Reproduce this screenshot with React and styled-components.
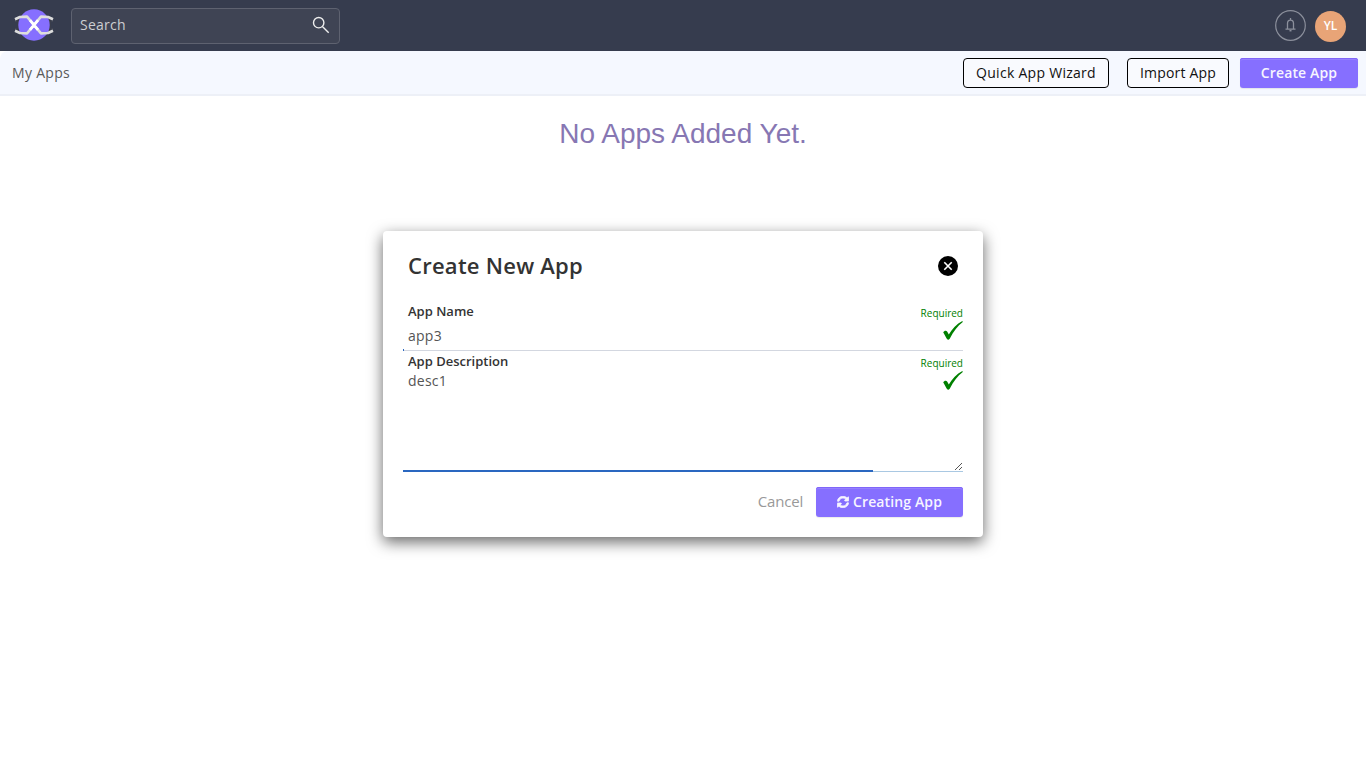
import React from 'react';
import styled, { createGlobalStyle } from 'styled-components';
import { FaSyncAlt } from 'react-icons/fa';

const GlobalStyle = createGlobalStyle`
  * { box-sizing: border-box; }
  body {
    margin: 0;
    min-height: 100vh;
    background: #fff;
    font-family: "Open Sans", sans-serif;
    font-size: 14px;
    color: #555;
  }
  button, input { font: inherit; margin: 0; }
`;

const Header = styled.header`
  display: flex;
  align-items: center;
  height: 51px;
  padding: 0 20px 0 14px;
  background: #363c4e;
`;

const Logo = styled.svg`
  display: block;
  width: 40px;
  height: 34px;
  margin: 0 17px 2px 0;
`;

const SearchBox = styled.div`
  display: flex;
  align-items: center;
  width: 269px;
  height: 36px;
  margin-top: 1px;
  padding: 0 9px 2px 8px;
  background: #3f4454;
  border: 1px solid #5e6270;
  border-radius: 4px;
`;

const SearchInput = styled.input`
  flex: 1;
  min-width: 0;
  height: 20px;
  padding: 0;
  margin-bottom: 1px;
  border: 0;
  outline: 0;
  background: transparent;
  color: #ccc;
  letter-spacing: 0.25px;
  &::placeholder { color: #ccced2; opacity: 1; }
`;

const HeaderActions = styled.div`
  display: flex;
  align-items: center;
  gap: 9px;
  margin-left: auto;
`;

const BellIcon = styled.svg`
  display: block;
  width: 31px;
  height: 31px;
`;

const Avatar = styled.div`
  width: 31px;
  height: 31px;
  margin-top: 2px;
  border-radius: 50%;
  background: #e8a477;
  color: #fff;
  font-size: 12px;
  font-weight: 600;
  line-height: 29px;
  text-align: center;
`;

const SubBarWrap = styled.nav`
  display: flex;
  align-items: center;
  height: 45px;
  padding: 1px 8px 0 12px;
  background: #f5f8ff;
  border-bottom: 2px solid #edf0f7;
  border-top-left-radius: 8px;
`;

const PageName = styled.span`
  margin: 0 auto 1px 0;
  color: #5a5a5a;
  letter-spacing: 0.3px;
`;

const OutlineButton = styled.button`
  width: ${(p) => p.$width}px;
  height: 30px;
  margin-right: ${(p) => p.$gap}px;
  padding: 0;
  border: 1px solid #000;
  border-radius: 4px;
  background: #f9fafe;
  color: #111;
  letter-spacing: ${(p) => p.$spacing}px;
  line-height: 26px;
`;

const PrimaryButton = styled.button`
  display: flex;
  align-items: center;
  justify-content: center;
  gap: 4px;
  width: ${(p) => p.$width}px;
  height: 30px;
  padding: 0 0 2px;
  border: 0;
  border-radius: 3px;
  background: #866fff;
  box-shadow: inset 0 1px 0 #7f66f8, inset 0 2px 0 #957fff, 0 1px 1px rgba(0, 0, 0, 0.08);
  color: #f7f5ff;
  font-weight: 600;
  letter-spacing: 0.13px;

  svg { margin-top: 2px; }
`;

const EmptyTitle = styled.h1`
  margin: 21px 0 0;
  color: #8777b3;
  font: 400 28px/34px "Liberation Sans", Arial, sans-serif;
  text-align: center;
`;

const Dialog = styled.section`
  width: 600px;
  height: 306px;
  margin: 80px auto 0;
  padding: 20px;
  border-radius: 4px;
  background: #fff;
  box-shadow: 0 5px 15px rgba(0, 0, 0, 0.6);
`;

const DialogHeader = styled.div`
  display: flex;
  align-items: center;
  justify-content: space-between;
  height: 30px;
  margin-bottom: 20px;
  padding: 0 5px;
`;

const DialogTitle = styled.h2`
  margin: 0 0 2px;
  color: #333;
  font-size: 22px;
  font-weight: 600;
  letter-spacing: 0.25px;
  line-height: 28px;
`;

const CloseIcon = styled.svg`
  display: block;
  width: 20px;
  height: 20px;
`;

const Field = styled.div`
  display: flex;
  justify-content: space-between;
  height: ${(p) => p.$height}px;
  padding-left: 5px;
  border-bottom: 1px solid ${(p) => p.$line};
`;

const FieldMain = styled.div`
  flex: 1;
`;

const Label = styled.label`
  display: block;
  color: #333;
  font-size: 13px;
  font-weight: 600;
  line-height: 20px;
`;

const Value = styled.div`
  margin-top: ${(p) => p.$offset}px;
  letter-spacing: 0.25px;
  line-height: 20px;
`;

const FieldStatus = styled.div`
  display: flex;
  flex-direction: column;
  align-items: flex-end;
  color: #008000;
  font-size: 10px;
  line-height: 14px;
  padding-top: 5px;
`;

const Check = styled.svg`
  display: block;
  width: 20px;
  height: 20px;
  margin-top: 1px;
`;

const Grip = styled.svg`
  display: block;
  width: 9px;
  height: 9px;
  margin-top: auto;
`;

/* Sits on the field's bottom border. */
const Progress = styled.div`
  position: relative;
  width: ${(p) => p.$width}px;
  height: 2px;
  margin-top: -2px;
  background: #2a67c0;
`;

const DialogFooter = styled.div`
  display: flex;
  align-items: center;
  justify-content: flex-end;
  gap: 13px;
  margin-top: 15px;
`;

const Cancel = styled.button`
  padding: 0 0 2px;
  border: 0;
  background: none;
  color: #999;
  font-size: 15px;
  letter-spacing: -0.2px;
  line-height: 28px;
`;

const CheckMark = () => (
  <Check viewBox="0 0 20 20">
    <path d="M0.2 11.3C1.2 9.6 3.3 9.2 4.3 10.7L5.8 13.5C9.2 7.8 13.6 2.8 19.4 0L19.8 1.1C14.5 5.1 10.3 11 7 17.2C6 18.9 4.4 19.3 3.6 17.6Z" fill="#008000" />
  </Check>
);

export default function App() {
  return (
    <>
      <GlobalStyle />
      <Header>
        <Logo viewBox="0 0 40 34">
          <path d="M1.8 10.5V14M38.2 10.5V14M1.8 20V23.5M38.2 20V23.5" stroke="#4b4e59" />
          <path d="M4.2 10.5V23.5M35.8 10.5V23.5" stroke="#3c3e48" strokeWidth="1.6" />
          <circle cx="20" cy="17" r="15.7" fill="#866fff" />
          <path d="M1 11.3L6 9L13 8.6L27 25.4L34 25L39 22.7M39 11.3L34 9L27 8.6L13 25.4L6 25L1 22.7" fill="none" stroke="#ddd" strokeWidth="2.6" strokeLinejoin="round" />
          <path d="M16 12.2L24 21.8M24 12.2L16 21.8" stroke="#fff" strokeWidth="2.8" />
        </Logo>
        <SearchBox>
          <SearchInput placeholder="Search" />
          <svg width="18" height="18" viewBox="0 0 18 18" fill="none" stroke="#eee" strokeWidth="1.4">
            <circle cx="6.7" cy="6.7" r="5.2" />
            <path d="M10.4 10.4L16.7 16.7" />
          </svg>
        </SearchBox>
        <HeaderActions>
          <BellIcon viewBox="0 0 31 31" fill="none" stroke="#8c909c">
            <circle cx="15.5" cy="15.5" r="14.8" strokeWidth="1.2" />
            <path d="M10.5 19.1H20.5M12.5 19V13.6C12.5 11.3 13.6 10.1 15.5 10.1S18.5 11.3 18.5 13.6V19M15.5 8V10" strokeWidth="1.3" />
            <path d="M14.5 20.7H16.5" strokeWidth="1.5" />
          </BellIcon>
          <Avatar>YL</Avatar>
        </HeaderActions>
      </Header>
      <SubBarWrap>
        <PageName>My Apps</PageName>
        <OutlineButton $width={146} $gap={18} $spacing={0.28}>Quick App Wizard</OutlineButton>
        <OutlineButton $width={102} $gap={11} $spacing={0.18}>Import App</OutlineButton>
        <PrimaryButton $width={118}>Create App</PrimaryButton>
      </SubBarWrap>
      <main>
        <EmptyTitle>No Apps Added Yet.</EmptyTitle>
        <Dialog>
          <DialogHeader>
            <DialogTitle>Create New App</DialogTitle>
            <CloseIcon viewBox="0 0 20 20">
              <circle cx="10" cy="10" r="10" fill="#000" />
              <path d="M6.3 6.3L13.7 13.7M13.7 6.3L6.3 13.7" stroke="#fff" strokeWidth="1.6" />
            </CloseIcon>
          </DialogHeader>
          <Field $height={50} $line="#d3d7e0">
            <FieldMain>
              <Label>App Name</Label>
              <Value $offset={5}>app3</Value>
            </FieldMain>
            <FieldStatus>
              Required
              <CheckMark />
            </FieldStatus>
          </Field>
          <Progress $width={1} />
          <Field $height={121} $line="#a9c8e2">
            <FieldMain>
              <Label>App Description</Label>
              <Value $offset={0}>desc1</Value>
            </FieldMain>
            <FieldStatus>
              Required
              <CheckMark />
              <Grip viewBox="0 0 9 9" stroke="#555" fill="none">
                <path d="M1 8L8 1M5 8L8 5" />
              </Grip>
            </FieldStatus>
          </Field>
          <Progress $width={470} />
          <DialogFooter>
            <Cancel>Cancel</Cancel>
            <PrimaryButton $width={147}>
              <FaSyncAlt size={12} stroke="currentColor" strokeWidth={30} />
              Creating App
            </PrimaryButton>
          </DialogFooter>
        </Dialog>
      </main>
    </>
  );
}
